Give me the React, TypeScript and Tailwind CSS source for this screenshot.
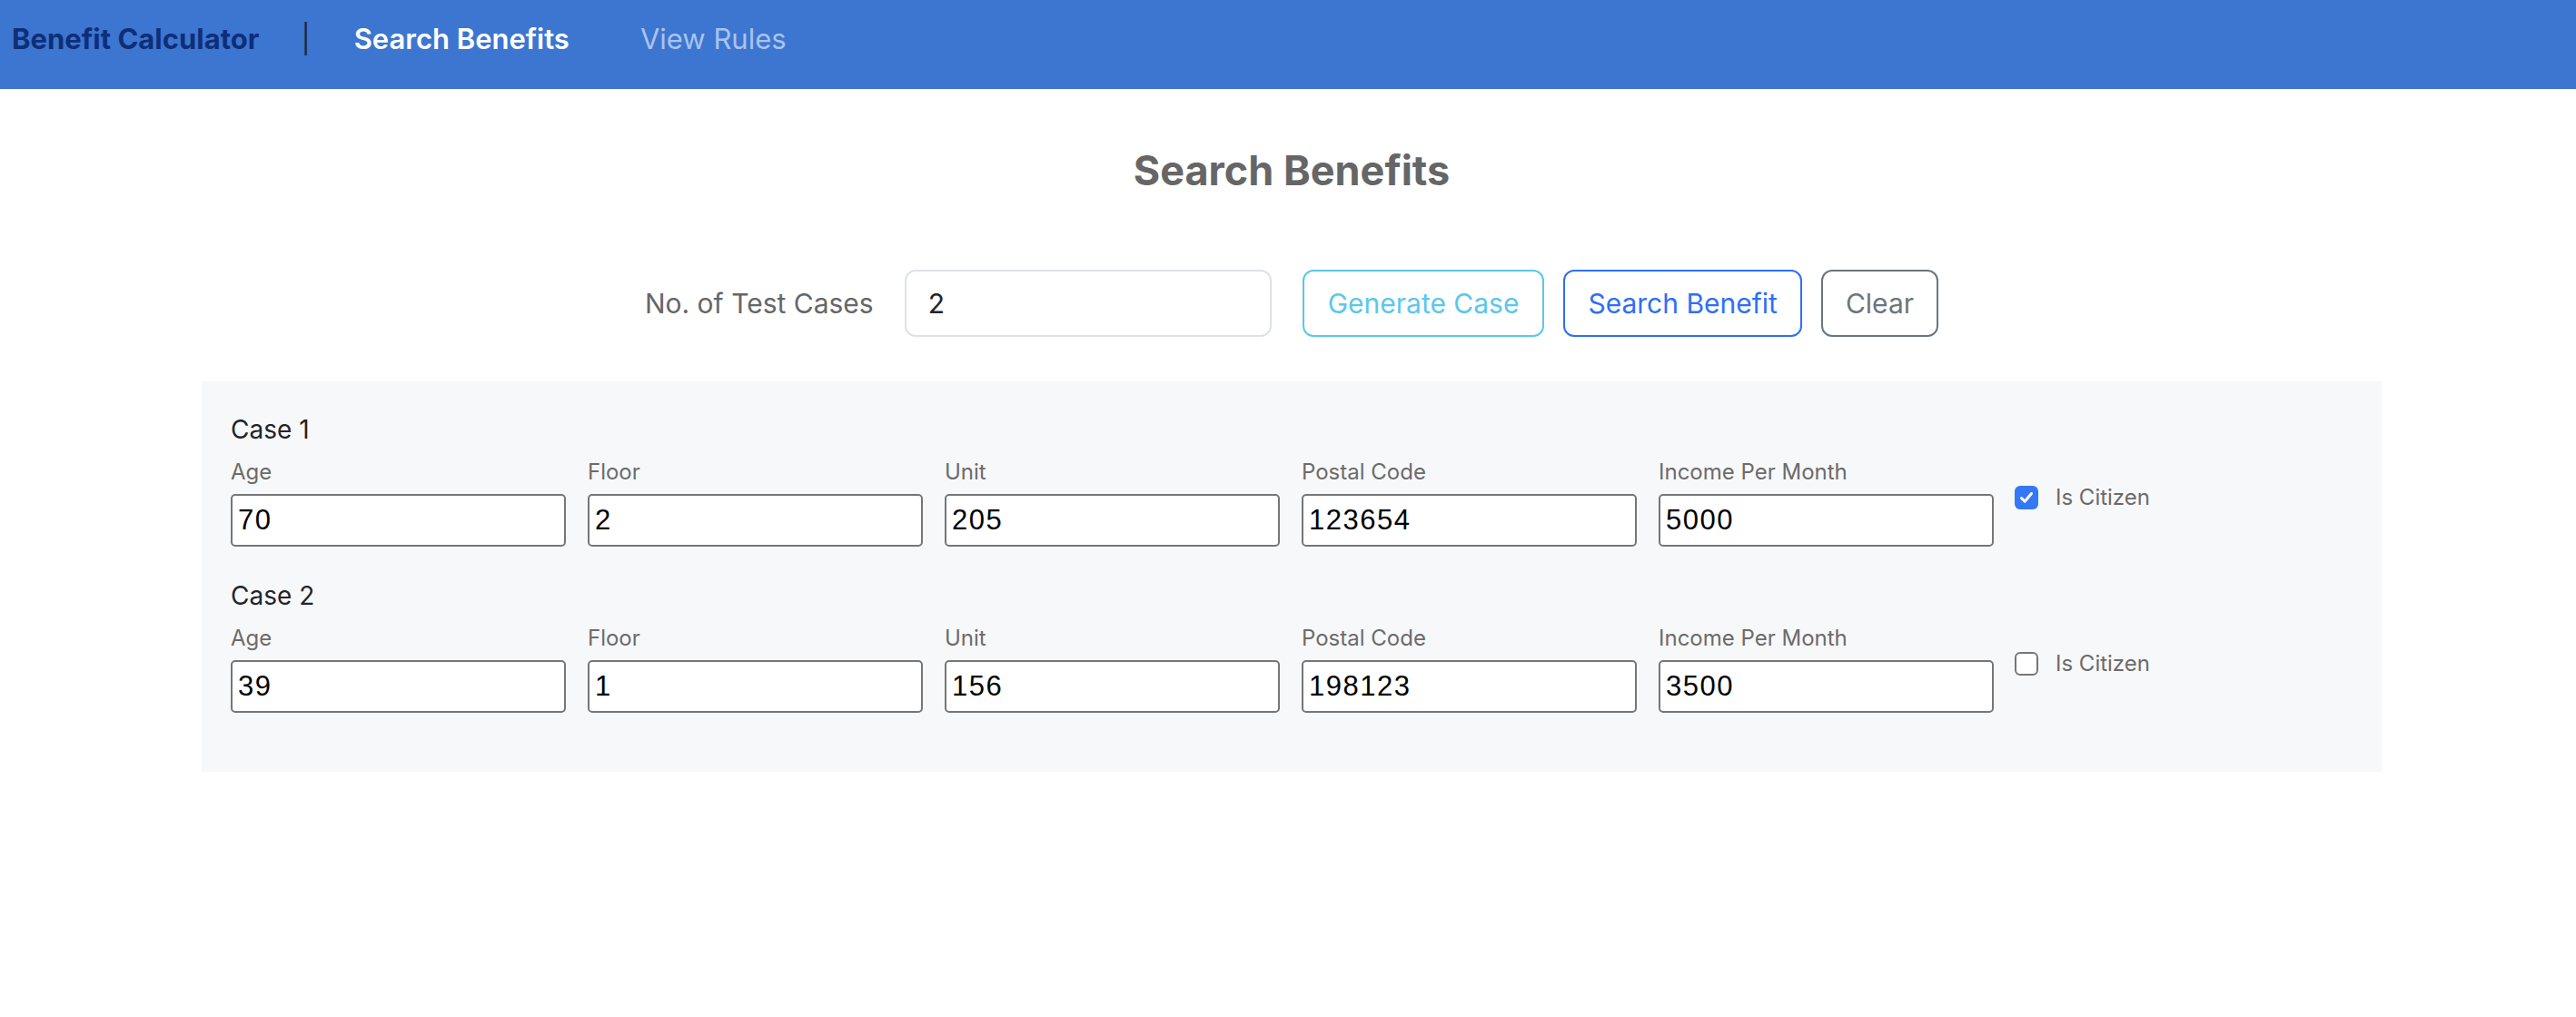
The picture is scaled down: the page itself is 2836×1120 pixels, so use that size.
import React from "react";

const cases = [
  { age: "70", floor: "2", unit: "205", postal: "123654", income: "5000", citizen: true },
  { age: "39", floor: "1", unit: "156", postal: "198123", income: "3500", citizen: false },
];

const fields: { label: string; key: "age" | "floor" | "unit" | "postal" | "income" }[] = [
  { label: "Age", key: "age" },
  { label: "Floor", key: "floor" },
  { label: "Unit", key: "unit" },
  { label: "Postal Code", key: "postal" },
  { label: "Income Per Month", key: "income" },
];

function Checkbox({ checked }: { checked: boolean }) {
  if (checked) {
    return (
      <div className="w-[26px] h-[26px] rounded-[6px] bg-[#3478f6] flex items-center justify-center shrink-0">
        <svg width="18" height="18" viewBox="0 0 18 18" fill="none">
          <path d="M3.5 9.5 L7.2 13.2 L14.5 4.5" stroke="white" strokeWidth="3" strokeLinecap="round" strokeLinejoin="round" />
        </svg>
      </div>
    );
  }
  return <div className="w-[26px] h-[26px] rounded-[6px] bg-white border-2 border-[#767676] shrink-0" />;
}

export default function App() {
  return (
    <div className="min-h-[1120px] bg-white font-['Inter',sans-serif]">
      <header className="h-[98px] bg-[#3c76d1] flex items-start pt-[25px] pl-[13px]">
        <span className="text-[31px] leading-[36px] font-bold text-[#0f2e78]">Benefit Calculator</span>
        <span className="text-[31px] leading-[36px] text-[#1b2940] ml-[46px]">|</span>
        <span className="text-[31px] leading-[36px] font-semibold text-white ml-[48px]">Search Benefits</span>
        <span className="text-[31px] leading-[36px] font-normal text-[#a9c3ee] ml-[78px]">View Rules</span>
      </header>

      <div className="flex justify-center pl-2">
        <div className="w-[2400px] flex flex-col items-center">
          <h2 className="mt-[67px] text-[45px] leading-[45px] font-bold text-[#666666]">Search Benefits</h2>

          <div className="mt-[87px] flex items-center">
            <span className="text-[30px] text-[#666666]">No. of Test Cases</span>
            <div className="ml-[34px] w-[404px] h-[74px] border-2 border-[#dee2e6] rounded-[12px] bg-white flex items-center px-[24px] text-[30px] text-[#212529]">
              2
            </div>
            <button className="ml-[34px] h-[74px] px-[26px] border-2 border-[#5bc7ea] rounded-[12px] text-[30px] text-[#5bc7ea] bg-white">
              Generate Case
            </button>
            <button className="ml-[21px] h-[74px] px-[25px] border-2 border-[#2f6ff5] rounded-[12px] text-[30px] text-[#2f6ff5] bg-white">
              Search Benefit
            </button>
            <button className="ml-[21px] h-[74px] px-[25px] border-2 border-[#6c757d] rounded-[12px] text-[30px] text-[#6c757d] bg-white">
              Clear
            </button>
          </div>

          <div className="mt-[49px] w-full bg-[#f7f8fa] pt-[36px] pb-[65px] px-[32px] flex flex-col gap-[37px]">
            {cases.map((c, i) => (
              <div key={i} className="flex flex-col">
                <div className="text-[28px] leading-[34px] text-[#212529]">Case {i + 1}</div>
                <div className="mt-[16px] flex items-start">
                  <div className="flex gap-[24px]">
                    {fields.map((f) => (
                      <div key={f.key} className="flex flex-col w-[369px]">
                        <span className="text-[24px] leading-[28px] text-[#6b6b6b]">{f.label}</span>
                        <div className="mt-[10px] h-[58px] border-2 border-[#767676] rounded-[5px] bg-white flex items-center pl-[6px] text-[31px] tracking-[1.5px] text-black font-['Liberation_Sans',Arial,sans-serif]">
                          {c[f.key]}
                        </div>
                      </div>
                    ))}
                  </div>
                  <div className="ml-[23px] mt-[29px] flex items-start gap-[19px]">
                    <Checkbox checked={c.citizen} />
                    <span className="text-[24px] leading-[28px] text-[#6b6b6b] -mt-[1px]">Is Citizen</span>
                  </div>
                </div>
              </div>
            ))}
          </div>
        </div>
      </div>
    </div>
  );
}
